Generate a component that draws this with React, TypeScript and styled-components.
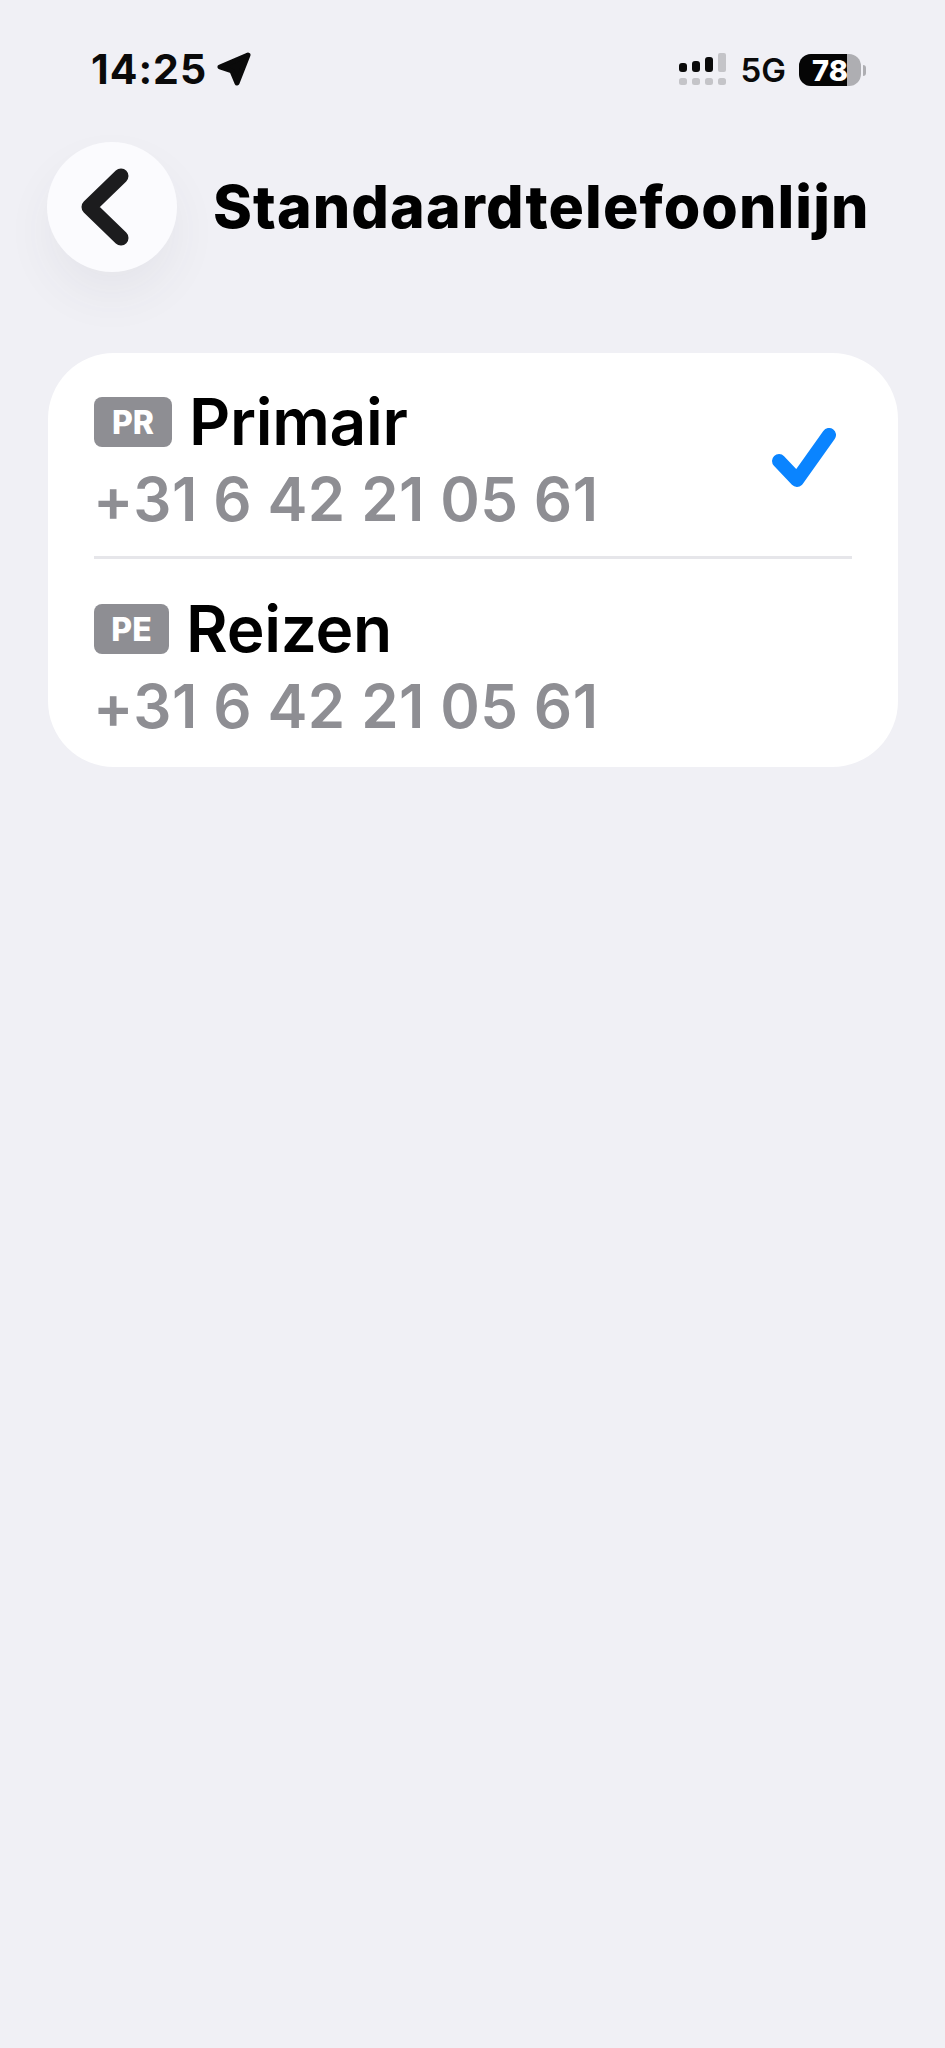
import styled, { createGlobalStyle } from 'styled-components'

const GlobalStyle = createGlobalStyle`
  html, body {
    margin: 0;
    padding: 0;
    background: #f0f0f5;
  }
  * {
    box-sizing: border-box;
  }
`

const Page = styled.div`
  width: 945px;
  height: 2048px;
  overflow: hidden;
  background: #f0f0f5;
  font-family: Inter, "Liberation Sans", sans-serif;
  color: #000;
`

const StatusBar = styled.div`
  height: 54px;
  margin-top: 48px;
  padding: 0 79px 0 91px;
  display: flex;
  align-items: flex-start;
  justify-content: space-between;
`

const TimeGroup = styled.div`
  display: flex;
  align-items: center;
  gap: 10px;
  height: 42px;
`

const Time = styled.span`
  font-size: 41px;
  font-weight: 700;
  line-height: 42px;
  letter-spacing: 1px;
  color: #0a0a0a;
`

const StatusRight = styled.div`
  display: flex;
  align-items: center;
  height: 44px;
`

const NetworkLabel = styled.span`
  font-size: 33px;
  font-weight: 600;
  line-height: 42px;
  margin: 0 13px 0 15px;
  color: #0a0a0a;
`

const Battery = styled.div`
  position: relative;
  width: 62px;
  height: 32px;
  border-radius: 12px;
  background: #aeaeb2;
  overflow: hidden;
`

const BatteryFill = styled.div`
  height: 100%;
  background: #050505;
`

const BatteryLevel = styled.span`
  position: absolute;
  inset: 0;
  display: flex;
  align-items: center;
  justify-content: center;
  font-size: 29px;
  font-weight: 800;
  color: #fff;
`

const BatteryTip = styled.div`
  width: 3px;
  height: 11px;
  margin-left: 2px;
  border-radius: 0 3px 3px 0;
  background: #aeaeb2;
`

const Header = styled.header`
  display: flex;
  align-items: center;
  gap: 36px;
  margin-top: 40px;
  padding-left: 47px;
`

const BackButton = styled.button`
  width: 130px;
  height: 130px;
  flex: none;
  padding: 0 14px 0 0;
  border: 0;
  border-radius: 50%;
  display: flex;
  align-items: center;
  justify-content: center;
  background: #fbfbfe;
  box-shadow: 0 24px 48px rgba(60, 60, 80, 0.06);
`

const Title = styled.h1`
  margin: 0;
  font-size: 59px;
  font-weight: 800;
  line-height: 70px;
  letter-spacing: 1.1px;
  white-space: nowrap;
`

const Card = styled.section`
  width: 850px;
  height: 414px;
  margin: 81px 0 0 48px;
  padding: 34px 46px 0;
  border-radius: 66px;
  background: #fff;
`

const Row = styled.div<{ $divided?: boolean }>`
  display: flex;
  align-items: flex-start;
  justify-content: space-between;
  ${({ $divided }) =>
    $divided
      ? 'height: 172px; border-bottom: 3px solid #e6e6ea;'
      : 'padding-top: 35px;'}
`

const RowText = styled.div`
  display: flex;
  flex-direction: column;
`

const NameLine = styled.div`
  display: flex;
  align-items: center;
  gap: 17px;
  height: 70px;
`

const Badge = styled.span<{ $width: number }>`
  width: ${({ $width }) => $width}px;
  height: 50px;
  border-radius: 8px;
  display: flex;
  align-items: center;
  justify-content: center;
  background: #8e8e93;
  color: #fff;
  font-size: 32px;
  font-weight: 800;
`

const Name = styled.span`
  font-size: 64px;
  font-weight: 600;
  line-height: 70px;
  letter-spacing: -0.3px;
`

const Phone = styled.div`
  margin: 9px 0 0 -1px;
  font-size: 60px;
  font-weight: 600;
  line-height: 66px;
  letter-spacing: 0.4px;
  color: #8e8e93;
`

const CheckIcon = styled.svg`
  margin-top: 41px;
  margin-right: 14px;
`

const lines = [
  { id: 'PR', name: 'Primair', phone: '+31 6 42 21 05 61', badge: 78, selected: true },
  { id: 'PE', name: 'Reizen', phone: '+31 6 42 21 05 61', badge: 75, selected: false },
]

const Signal = () => (
  <svg width="47" height="34" viewBox="0 0 47 34">
    <rect x="0" y="10" width="8" height="9" rx="3" fill="#0a0a0a" />
    <rect x="13" y="8" width="8" height="11" rx="3" fill="#0a0a0a" />
    <rect x="26" y="4" width="8" height="15" rx="3" fill="#0a0a0a" />
    <rect x="39" y="0" width="8" height="19" rx="2" fill="#c4c4c8" />
    {[0, 13, 26, 39].map(x => (
      <rect key={x} x={x} y="25" width="8" height="7" rx="2.5" fill="#c4c4c8" />
    ))}
  </svg>
)

export default function App() {
  return (
    <Page>
      <GlobalStyle />
      <StatusBar>
        <TimeGroup>
          <Time>14:25</Time>
          <svg width="34" height="34" viewBox="0 0 34 34">
            <path
              d="M31 3 L3 15 L15 19 L20 31 Z"
              fill="#0a0a0a"
              stroke="#0a0a0a"
              strokeWidth="5"
              strokeLinejoin="round"
            />
          </svg>
        </TimeGroup>
        <StatusRight>
          <Signal />
          <NetworkLabel>5G</NetworkLabel>
          <Battery>
            <BatteryFill style={{ width: `${(48 / 62) * 100}%` }} />
            <BatteryLevel>78</BatteryLevel>
          </Battery>
          <BatteryTip />
        </StatusRight>
      </StatusBar>

      <Header>
        <BackButton aria-label="Terug">
          <svg width="50" height="78" viewBox="0 0 50 78">
            <path
              d="M41 8 L9 39 L41 70"
              fill="none"
              stroke="#1c1c1e"
              strokeWidth="15"
              strokeLinecap="round"
              strokeLinejoin="round"
            />
          </svg>
        </BackButton>
        <Title>Standaardtelefoonlijn</Title>
      </Header>

      <Card>
        {lines.map((line, index) => (
          <Row key={line.id} $divided={index === 0}>
            <RowText>
              <NameLine>
                <Badge $width={line.badge}>{line.id}</Badge>
                <Name>{line.name}</Name>
              </NameLine>
              <Phone>{line.phone}</Phone>
            </RowText>
            {line.selected && (
              <CheckIcon width="66" height="62" viewBox="0 0 66 62">
                <path
                  d="M7 33 L25 52 L57 7"
                  fill="none"
                  stroke="#0a84ff"
                  strokeWidth="14"
                  strokeLinecap="round"
                  strokeLinejoin="round"
                />
              </CheckIcon>
            )}
          </Row>
        ))}
      </Card>
    </Page>
  )
}
